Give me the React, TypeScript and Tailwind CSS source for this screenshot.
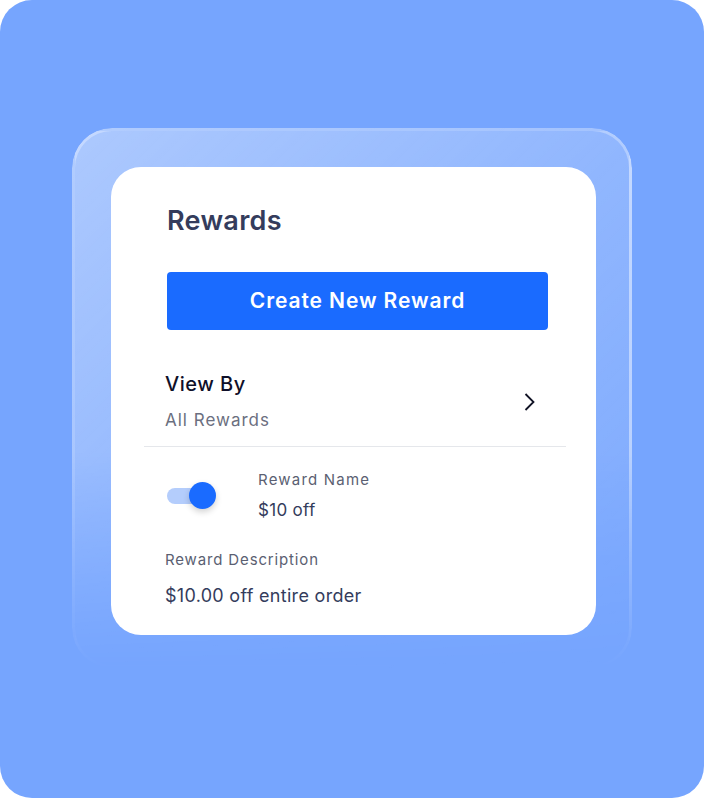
import React from "react";

export default function App() {
  return (
    <div className="w-[704px] h-[798px] bg-white">
      <div
        className="relative w-[704px] h-[798px] rounded-[32px] bg-[#76a5fe] overflow-hidden"
        style={{ fontFamily: "Inter, 'Noto Sans', sans-serif" }}
      >
        {/* glass frame */}
        <div className="absolute left-[72px] top-[128px] w-[560px] h-[540px] rounded-[40px] border-[3px] border-white/30 bg-gradient-to-br from-white/40 via-white/20 to-white/5 [mask-image:linear-gradient(to_bottom,black_0%,black_60%,transparent_100%)]" />
        {/* card */}
        <div className="absolute left-[111px] top-[167px] w-[485px] h-[468px] rounded-[30px] bg-white flex flex-col pt-[38px]">
          <h1 className="pl-[56px] text-[27px] leading-[32px] font-semibold text-[#343c5c] tracking-[0.3px]">
            Rewards
          </h1>
          <div className="pl-[56px] pr-[48px] mt-[35px]">
            <button className="w-full h-[58px] rounded-[4px] bg-[#1a6bff] text-white text-[21px] font-semibold tracking-[0.9px]">
              Create New Reward
            </button>
          </div>
          <div className="pl-[54px] pr-[60px] mt-[40px] flex items-center justify-between">
            <div className="flex flex-col">
              <span className="text-[20px] leading-[28px] font-medium text-[#0f1029] tracking-[0.5px]">View By</span>
              <span className="mt-[10px] text-[17px] leading-[24px] text-[#6b6f80] tracking-[1px]">All Rewards</span>
            </div>
            <svg width="14" height="20" viewBox="0 0 14 20" className="mt-[2px]">
              <path d="M3.5 2 L11.5 10 L3.5 18" fill="none" stroke="#111325" strokeWidth="1.8" />
            </svg>
          </div>
          <div className="ml-[33px] mr-[30px] mt-[14px] h-px bg-[#e5e7eb]" />
          <div className="pl-[56px] mt-[23px] flex">
            <div className="w-[91px] flex items-center">
              <div className="relative w-[48px] h-[28px] flex items-center">
                <div className="w-[44px] h-[16px] rounded-full bg-[#b4cdfc]" />
                <div className="absolute left-[22px] top-[0px] w-[27px] h-[27px] rounded-full bg-[#1a6bff] shadow-[0_3px_6px_rgba(0,0,0,0.18)]" />
              </div>
            </div>
            <div className="flex flex-col">
              <span className="text-[15px] leading-[20px] text-[#5b5f72] tracking-[1.2px]">Reward Name</span>
              <span className="mt-[8px] text-[17px] leading-[24px] text-[#343c5c] tracking-[0.3px]">$10 off</span>
            </div>
          </div>
          <div className="pl-[54px] mt-[28px] flex flex-col">
            <span className="text-[15px] leading-[20px] text-[#5b5f72] tracking-[0.85px]">Reward Description</span>
            <span className="mt-[14px] text-[18px] leading-[24px] text-[#343c5c] tracking-[0.3px]">$10.00 off entire order</span>
          </div>
        </div>
      </div>
    </div>
  );
}
